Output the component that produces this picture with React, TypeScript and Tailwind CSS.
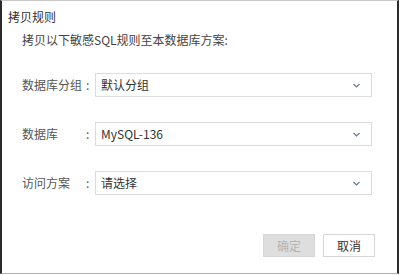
import React from 'react';

const Chevron = () => (
  <svg width="7" height="5" viewBox="0 0 7 5" className="flex-shrink-0">
    <polyline points="0.5,1 3.5,4 6.5,1" fill="none" stroke="#6b7a8c" strokeWidth="1.2" />
  </svg>
);

const SelectRow = ({ label, value }: { label: string; value: string }) => (
  <div className="flex items-center h-[24px]">
    <span className="w-[64px] text-[#555]">{label}</span>
    <span className="w-[9px] text-[#555]">:</span>
    <div className="w-[277px] h-[24px] flex items-center justify-between border border-[#dcdcdc] bg-white pl-[5px] pr-[11px]">
      <span className="text-[#333]">{value}</span>
      <Chevron />
    </div>
  </div>
);

export default function App() {
  return (
    <div className="w-[400px] h-[275px] bg-white">
      <div
        className="w-[399px] h-[274px] flex flex-col border-l-2 border-r-2 border-l-[#2b2b2b] border-r-[#2b2b2b] border-t border-b border-t-[#c8c8c8] border-b-[#b0b0b0] text-[12px] leading-[16px]"
        style={{ fontFamily: '"Noto Sans CJK SC", "Noto Sans", sans-serif' }}
      >
        {/* Заголовок */}
        <div className="pl-[6px] pt-[8px] text-[#333]">拷贝规则</div>
        <div className="pl-[20px] mt-[7px] text-[#444]">拷贝以下敏感SQL规则至本数据库方案:</div>

        {/* Поля */}
        <div className="pl-[20px] mt-[25px] flex flex-col gap-[25px]">
          <SelectRow label="数据库分组" value="默认分组" />
          <SelectRow label="数据库" value="MySQL-136" />
          <SelectRow label="访问方案" value="请选择" />
        </div>

        {/* Кнопки */}
        <div className="mt-[39px] flex justify-end gap-[8px] pr-[22px]">
          <button className="w-[52px] h-[23px] bg-[#dedede] border border-[#d6d6d6] text-[#b4b4b4]">确定</button>
          <button className="w-[52px] h-[23px] bg-white border border-[#d6d6d6] text-[#333]">取消</button>
        </div>
      </div>
    </div>
  );
}
